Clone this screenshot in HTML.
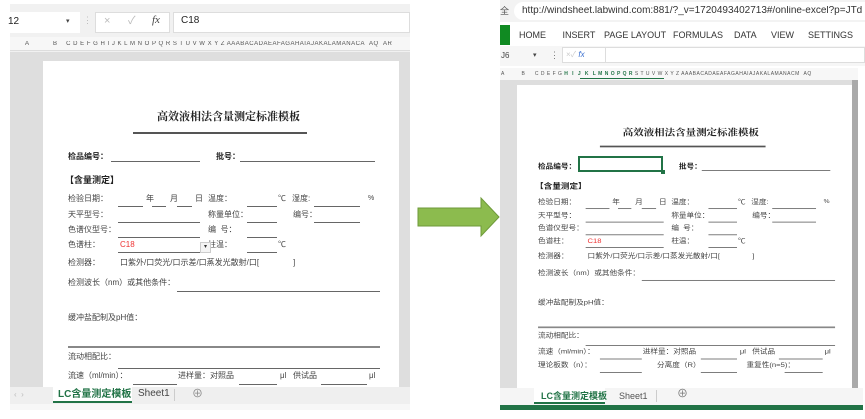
<!DOCTYPE html>
<html style="overflow:hidden;width:865px;height:419px"><head><meta charset="utf-8"><style>
*{margin:0;padding:0;box-sizing:border-box}
body{width:865px;height:419px;background:#fff;position:relative;overflow:hidden;font-family:"Liberation Sans","Noto Sans CJK SC",sans-serif;color:#333}
.a{position:absolute}
.t{position:absolute;font-size:8px;white-space:nowrap;line-height:10px;color:#444}
.b{font-weight:bold;color:#222}
.l{position:absolute;height:1px;background:#666}
.tpl{position:absolute;left:0;top:0;width:865px;height:419px}
.clipL{position:absolute;left:43px;top:61px;width:356px;height:326px;overflow:hidden;background:#fff}
.clipR{position:absolute;left:517px;top:85px;width:335px;height:303px;overflow:hidden;background:#fff}
.col{position:absolute;font-size:6px;color:#555;white-space:nowrap;letter-spacing:0.5px;overflow:hidden}
</style></head><body>

<div class="a" style="left:10px;top:4px;width:400px;height:48px;background:#f1f1f1"></div>
<div class="a" style="left:10px;top:12px;width:70px;height:21px;background:#fff"></div>
<div class="t" style="left:8px;top:17px;font-size:10px;color:#222">12</div>
<div class="t" style="left:66px;top:17px;font-size:7px">▾</div>
<div class="t" style="left:83px;top:15px;font-size:9px;color:#bbb">⋮</div>
<div class="a" style="left:95px;top:12px;width:75px;height:21px;background:#fff;border:1px solid #ddd"></div>
<div class="t" style="left:104px;top:16px;font-size:11px;color:#bbb">×</div>
<div class="t" style="left:128px;top:16px;font-size:11px;color:#bbb">✓</div>
<div class="t" style="left:152px;top:15px;font-size:11px;color:#444;font-style:italic;font-family:'Liberation Serif',serif">fx</div>
<div class="a" style="left:173px;top:12px;width:237px;height:21px;background:#fff;border:1px solid #ddd"></div>
<div class="t" style="left:181px;top:16px;font-size:10px;color:#222">C18</div>
<div class="a" style="left:10px;top:37px;width:400px;height:14px;background:#f7f7f7;border-bottom:1px solid #ddd"></div>
<div class="col" style="left:25px;top:41px;width:385px">A &nbsp; &nbsp; &nbsp; &nbsp; &nbsp; B &nbsp; &nbsp;C D E F G H I J K L M N O P Q R S T U V W X Y Z AAABACADAEAFAGAHAIAJAKALAMANACA &nbsp;AQ &nbsp;AR</div>
<div class="a" style="left:10px;top:52px;width:400px;height:335px;background:#dedede"></div>
<div class="clipL"><div class="tpl" id="L" style="left:-43px;top:-61px"></div></div>
<div class="a" style="left:10px;top:387px;width:400px;height:17px;background:#efefef"></div>
<div class="t" style="left:14px;top:390px;color:#bbb">‹ &nbsp;›</div>
<div class="a" style="left:53px;top:387px;width:79px;height:16px;background:#fff;border-bottom:2px solid #217346"></div>
<div class="t b" style="left:58px;top:390px;font-size:10px;color:#217346">LC含量测定模板</div>
<div class="t" style="left:138px;top:389px;font-size:10px;color:#444">Sheet1</div>
<div class="a" style="left:174px;top:389px;width:1px;height:12px;background:#ccc"></div>
<div class="t" style="left:192px;top:389px;font-size:11px;color:#888">⊕</div>
<div class="a" style="left:10px;top:404px;width:400px;height:6px;background:#f7f7f7"></div>

<svg class="a" style="left:415px;top:196px" width="88" height="42"><polygon points="3,12 66,12 66,2 84,21 66,40 66,30 3,30" fill="#8cbb4e" stroke="#6e9a3a" stroke-width="1"/></svg>

<div class="a" style="left:500px;top:0;width:365px;height:22px;background:#f3f3f3"></div>
<div class="t" style="left:500px;top:6px;font-size:9px;color:#555">全</div>
<div class="a" style="left:514px;top:2px;width:351px;height:18px;background:#fff;border-radius:9px 0 0 9px"></div>
<div class="t" style="left:522px;top:6px;font-size:10px;color:#333;width:343px;overflow:hidden">http://windsheet.labwind.com:881/?_v=1720493402713#/online-excel?p=JTd</div>
<div class="a" style="left:500px;top:24px;width:365px;height:22px;background:#fff"></div>
<div class="a" style="left:500px;top:25px;width:10px;height:20px;background:#108a22"></div>
<div class="t" style="left:519px;top:30px;font-size:9px;color:#333;word-spacing:14px">HOME INSERT</div>
<div class="t" style="left:604px;top:30px;font-size:9px;color:#333">PAGE LAYOUT</div>
<div class="t" style="left:673px;top:30px;font-size:9px;color:#333">FORMULAS</div>
<div class="t" style="left:734px;top:30px;font-size:9px;color:#333">DATA</div>
<div class="t" style="left:771px;top:30px;font-size:9px;color:#333">VIEW</div>
<div class="t" style="left:808px;top:30px;font-size:9px;color:#333">SETTINGS</div>
<div class="a" style="left:500px;top:46px;width:365px;height:20px;background:#f6f6f6"></div>
<div class="t" style="left:501px;top:51px;font-size:8px">J6</div>
<div class="t" style="left:533px;top:51px;font-size:7px">▾</div>
<div class="t" style="left:550px;top:50px;font-size:9px;color:#777">⋮</div>
<div class="a" style="left:562px;top:47px;width:45px;height:16px;background:#fff;border:1px solid #ddd"></div>
<div class="t" style="left:566px;top:50px;font-size:8px;color:#ccc">×✓ <span style="color:#3a6fd0;font-style:italic">fx</span></div>
<div class="a" style="left:605px;top:47px;width:260px;height:16px;background:#fff;border:1px solid #ddd"></div>
<div class="a" style="left:500px;top:68px;width:358px;height:12px;background:#f7f7f7"></div>
<div class="col" style="left:501px;top:71px;font-size:5px;width:357px">A &nbsp; &nbsp; &nbsp; &nbsp; B &nbsp; &nbsp; C D E F G <b style="color:#217346">H &nbsp;I &nbsp;J &nbsp;K &nbsp;L M N O P Q R</b> S T U V W X Y Z AAABACADAEAFAGAHAIAJAKALAMANACM &nbsp;AQ</div>
<div class="a" style="left:580px;top:78px;width:84px;height:1px;background:#217346"></div>
<div class="a" style="left:500px;top:80px;width:358px;height:308px;background:#dedede"></div>
<div class="a" style="left:852px;top:80px;width:6px;height:308px;background:#aaa"></div>
<div class="clipR"><div class="tpl" id="R" style="left:-517px;top:-85px"></div></div>
<div class="a" style="left:500px;top:388px;width:363px;height:17px;background:#f5f5f5"></div>
<div class="a" style="left:534px;top:388px;width:71px;height:16px;background:#fff;border-bottom:2px solid #217346"></div>
<div class="t b" style="left:541px;top:391px;font-size:9px;color:#217346">LC含量测定模板</div>
<div class="t" style="left:619px;top:391px;font-size:9px;color:#555">Sheet1</div>
<div class="a" style="left:656px;top:390px;width:1px;height:12px;background:#ccc"></div>
<div class="t" style="left:677px;top:389px;font-size:11px;color:#777">⊕</div>
<div class="a" style="left:500px;top:405px;width:363px;height:5px;background:#217346"></div>

<template id="T">
<div class="t b" style="left:157px;top:111px;font-size:11px;line-height:13px;font-family:'Liberation Serif','Noto Serif CJK SC',serif">高效液相法含量测定标准模板</div>
<div class="l" style="left:133px;top:132px;width:174px;height:2px;background:#555"></div>
<div class="t b" style="left:68px;top:152px">检品编号：</div>
<div class="l" style="left:111px;top:161px;width:89px"></div>
<div class="t b" style="left:216px;top:152px">批号：</div>
<div class="l" style="left:240px;top:161px;width:135px"></div>
<div class="t b" style="left:65px;top:175px;font-size:9px">【含量测定】</div>
<div class="t" style="left:68px;top:194px">检验日期：</div>
<div class="l" style="left:118px;top:206px;width:25px"></div>
<div class="t" style="left:146px;top:194px">年</div>
<div class="l" style="left:152px;top:206px;width:14px"></div>
<div class="t" style="left:170px;top:194px">月</div>
<div class="l" style="left:177px;top:206px;width:15px"></div>
<div class="t" style="left:195px;top:194px">日</div>
<div class="t" style="left:208px;top:194px">温度：</div>
<div class="l" style="left:247px;top:206px;width:30px"></div>
<div class="t" style="left:278px;top:194px">℃</div>
<div class="t" style="left:292px;top:194px">湿度:</div>
<div class="l" style="left:314px;top:206px;width:46px"></div>
<div class="t" style="left:368px;top:194px;font-size:7px">%</div>
<div class="t" style="left:68px;top:210px">天平型号：</div>
<div class="l" style="left:118px;top:222px;width:82px"></div>
<div class="t" style="left:208px;top:210px">称量单位：</div>
<div class="l" style="left:247px;top:222px;width:30px"></div>
<div class="t" style="left:293px;top:210px">编号：</div>
<div class="l" style="left:314px;top:222px;width:46px"></div>
<div class="t" style="left:68px;top:225px">色谱仪型号：</div>
<div class="l" style="left:118px;top:237px;width:82px"></div>
<div class="t" style="left:208px;top:225px">编 &nbsp;号：</div>
<div class="l" style="left:247px;top:237px;width:30px"></div>
<div class="t" style="left:68px;top:240px">色谱柱：</div>
<div class="t" style="left:120px;top:240px;color:#e33">C18</div>
<div class="l" style="left:118px;top:252px;width:82px"></div>
<div class="t" style="left:208px;top:240px">柱温：</div>
<div class="l" style="left:247px;top:252px;width:30px"></div>
<div class="t" style="left:278px;top:240px">℃</div>
<div class="t" style="left:68px;top:258px">检测器：</div>
<div class="t" style="left:120px;top:258px">口紫外/口荧光/口示差/口蒸发光散射/口[</div>
<div class="t" style="left:293px;top:258px">]</div>
<div class="t" style="left:68px;top:278px">检测波长（nm）或其他条件：</div>
<div class="l" style="left:177px;top:291px;width:203px"></div>
<div class="t" style="left:68px;top:313px">缓冲盐配制及pH值：</div>
<div class="l" style="left:68px;top:346px;width:312px;height:2px;background:#888"></div>
<div class="t" style="left:68px;top:352px">流动相配比：</div>
<div class="l" style="left:118px;top:368px;width:262px"></div>
<div class="t" style="left:68px;top:371px">流速（ml/min）：</div>
<div class="l" style="left:133px;top:384px;width:44px"></div>
<div class="t" style="left:178px;top:371px">进样量：对照品</div>
<div class="l" style="left:239px;top:384px;width:38px"></div>
<div class="t" style="left:280px;top:371px">μl</div>
<div class="t" style="left:293px;top:371px">供试品</div>
<div class="l" style="left:321px;top:384px;width:46px"></div>
<div class="t" style="left:369px;top:371px">μl</div>
<div class="t" style="left:68px;top:387px">理论板数（n）：</div>
<div class="l" style="left:133px;top:400px;width:44px"></div>
<div class="t" style="left:193px;top:387px">分离度（R）</div>
<div class="l" style="left:239px;top:400px;width:38px"></div>
<div class="t" style="left:287px;top:387px">重复性(n=5)：</div>
<div class="l" style="left:327px;top:400px;width:40px"></div>
</template>
<script>
var h=document.getElementById('T').innerHTML;
var L=document.getElementById('L');L.innerHTML=h+'<div class="a" style="left:200px;top:242px;width:11px;height:11px;background:#f4f4f4;border:1px solid #ccc;font-size:6px;text-align:center;line-height:9px">▾</div>';
var R=document.getElementById('R');
R.innerHTML='<div style="position:absolute;left:0;top:0;width:865px;height:419px;transform-origin:0 0;transform:translate(473.3px,34.1px) scale(.952,.845)">'+h+'</div><div class="a" style="left:578px;top:156px;width:85px;height:16px;border:2px solid #217346;background:#fff"></div><div class="a" style="left:661px;top:170px;width:4px;height:4px;background:#217346"></div>';
</script>
</body></html>
